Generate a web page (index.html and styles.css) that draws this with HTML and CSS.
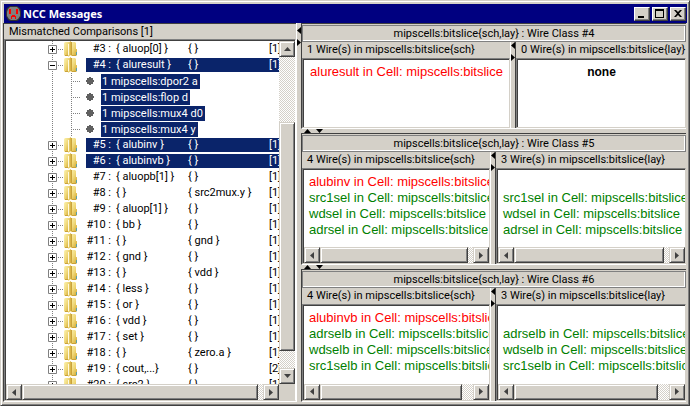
FILE: index.html
```html
<!DOCTYPE html>
<html lang="en">
<head>
<meta charset="utf-8">
<title>NCC Messages</title>
<link rel="stylesheet" href="styles.css">
</head>
<body>
<svg class="symbols" aria-hidden="true">
  <defs>
    <linearGradient id="gold" x1="0" y1="0" x2="1" y2="1">
      <stop offset="0" stop-color="#fbf3b4"/><stop offset=".5" stop-color="#f0d878"/><stop offset="1" stop-color="#cfa42c"/>
    </linearGradient>
    <linearGradient id="cover" x1="0" y1="0" x2="1" y2="0">
      <stop offset="0" stop-color="#f4e28c"/><stop offset="1" stop-color="#d4ad3c"/>
    </linearGradient>
    <symbol id="folder" viewBox="0 0 14 16">
      <path d="M0 2l1-1h4v14H1l-1-1z" fill="url(#gold)"/>
      <path d="M6 1h5l1 1v6h1v6l-1 1H7z" fill="url(#gold)"/>
      <path d="M4 2l3-2v14l-3 2z" fill="url(#cover)"/>
      <path d="M7.500 1v13M1 14.500h3M8 14.500h4" stroke="#c9a23a" fill="none"/>
      <path d="M4.500 3v11" stroke="#fffbe0"/>
      <path d="M12.500 11v3" stroke="#5aa0a8"/>
    </symbol>
    <symbol id="plus" viewBox="0 0 9 9"><path d="M.5.5h8v8h-8z" fill="#fff" stroke="#808080"/><path d="M2 4.5h5M4.5 2v5" stroke="#000"/></symbol>
    <symbol id="minus" viewBox="0 0 9 9"><path d="M.5.5h8v8h-8z" fill="#fff" stroke="#808080"/><path d="M2 4.5h5" stroke="#000"/></symbol>
    <symbol id="dot" viewBox="0 0 8 8"><path d="M3 0h2v1h2v2h1v2H7v2H5v1H3V7H1V5H0V3h1V1h2z" fill="#606060"/></symbol>
    <symbol id="left" viewBox="0 0 4 7"><path d="M4 0v7L0 3.5z"/></symbol>
    <symbol id="right" viewBox="0 0 4 7"><path d="M0 0v7l4-3.500z"/></symbol>
    <symbol id="up" viewBox="0 0 7 4"><path d="M0 4h7L3.500 0z"/></symbol>
    <symbol id="down" viewBox="0 0 7 4"><path d="M0 0h7L3.500 4z"/></symbol>
  </defs>
</svg>
<div class="window">
  <header class="titlebar">
    <svg class="app-icon" viewBox="0 0 15 15" aria-hidden="true">
      <path d="M4 0h7l3 2 1 3v5l-2 4-2 1H4l-2-1-2-4V5l1-3z" fill="#303030"/>
      <path d="M4 1h7l2 2 1 3v4l-2 3-2 1H5l-2-1-2-3V6l1-3z" fill="#808080"/>
      <path d="M3 3h2v5H3zM10 3h2v5h-2zM6 9h3v1h1v3H9v-2H6v2H5v-3h1z" fill="#f00"/>
    </svg>
    <h1>NCC Messages</h1>
    <div class="controls">
      <button aria-label="Minimize"><svg viewBox="0 0 12 10"><path d="M2 7h6v2H2z"/></svg></button>
      <button aria-label="Maximize"><svg viewBox="0 0 12 10"><path d="M1 0h9v9H1zM2 2v6h7V2z" fill-rule="evenodd"/></svg></button>
      <button aria-label="Close"><svg viewBox="0 0 12 10"><path d="M2 1h2l2 2 2-2h2L7 4.500 10 8H8L6 6 4 8H2l3-3.500z"/></svg></button>
    </div>
  </header>
  <main class="panes">
    <section class="tree-pane">
      <h2 class="caption">Mismatched Comparisons [1]</h2>
      <div class="tree-box">
        <ul class="tree">
          <li class="row"><button class="toggle" aria-label="Expand"><svg><use href="#plus"/></svg></button><svg class="folder"><use href="#folder"/></svg><span class="entry"><span>#3 :</span><span>{ aluop[0] }</span><span>{ }</span><span>[1]</span></span></li>
          <li class="row selected"><button class="toggle" aria-label="Collapse"><svg><use href="#minus"/></svg></button><svg class="folder"><use href="#folder"/></svg><span class="entry"><span>#4 :</span><span>{ aluresult }</span><span>{ }</span><span>[1]</span></span></li>
          <li class="leaf"><svg><use href="#dot"/></svg><span>1 mipscells:dpor2 a</span></li>
          <li class="leaf"><svg><use href="#dot"/></svg><span>1 mipscells:flop d</span></li>
          <li class="leaf"><svg><use href="#dot"/></svg><span>1 mipscells:mux4 d0</span></li>
          <li class="leaf"><svg><use href="#dot"/></svg><span>1 mipscells:mux4 y</span></li>
          <li class="row selected"><button class="toggle" aria-label="Expand"><svg><use href="#plus"/></svg></button><svg class="folder"><use href="#folder"/></svg><span class="entry"><span>#5 :</span><span>{ alubinv }</span><span>{ }</span><span>[1]</span></span></li>
          <li class="row selected"><button class="toggle" aria-label="Expand"><svg><use href="#plus"/></svg></button><svg class="folder"><use href="#folder"/></svg><span class="entry"><span>#6 :</span><span>{ alubinvb }</span><span>{ }</span><span>[1]</span></span></li>
          <li class="row"><button class="toggle" aria-label="Expand"><svg><use href="#plus"/></svg></button><svg class="folder"><use href="#folder"/></svg><span class="entry"><span>#7 :</span><span>{ aluopb[1] }</span><span>{ }</span><span>[1]</span></span></li>
          <li class="row"><button class="toggle" aria-label="Expand"><svg><use href="#plus"/></svg></button><svg class="folder"><use href="#folder"/></svg><span class="entry"><span>#8 :</span><span>{ }</span><span>{ src2mux.y }</span><span>[1]</span></span></li>
          <li class="row"><button class="toggle" aria-label="Expand"><svg><use href="#plus"/></svg></button><svg class="folder"><use href="#folder"/></svg><span class="entry"><span>#9 :</span><span>{ aluop[1] }</span><span>{ }</span><span>[1]</span></span></li>
          <li class="row"><button class="toggle" aria-label="Expand"><svg><use href="#plus"/></svg></button><svg class="folder"><use href="#folder"/></svg><span class="entry"><span>#10 :</span><span>{ bb }</span><span>{ }</span><span>[1]</span></span></li>
          <li class="row"><button class="toggle" aria-label="Expand"><svg><use href="#plus"/></svg></button><svg class="folder"><use href="#folder"/></svg><span class="entry"><span>#11 :</span><span>{ }</span><span>{ gnd }</span><span>[1]</span></span></li>
          <li class="row"><button class="toggle" aria-label="Expand"><svg><use href="#plus"/></svg></button><svg class="folder"><use href="#folder"/></svg><span class="entry"><span>#12 :</span><span>{ gnd }</span><span>{ }</span><span>[1]</span></span></li>
          <li class="row"><button class="toggle" aria-label="Expand"><svg><use href="#plus"/></svg></button><svg class="folder"><use href="#folder"/></svg><span class="entry"><span>#13 :</span><span>{ }</span><span>{ vdd }</span><span>[1]</span></span></li>
          <li class="row"><button class="toggle" aria-label="Expand"><svg><use href="#plus"/></svg></button><svg class="folder"><use href="#folder"/></svg><span class="entry"><span>#14 :</span><span>{ less }</span><span>{ }</span><span>[1]</span></span></li>
          <li class="row"><button class="toggle" aria-label="Expand"><svg><use href="#plus"/></svg></button><svg class="folder"><use href="#folder"/></svg><span class="entry"><span>#15 :</span><span>{ or }</span><span>{ }</span><span>[1]</span></span></li>
          <li class="row"><button class="toggle" aria-label="Expand"><svg><use href="#plus"/></svg></button><svg class="folder"><use href="#folder"/></svg><span class="entry"><span>#16 :</span><span>{ vdd }</span><span>{ }</span><span>[1]</span></span></li>
          <li class="row"><button class="toggle" aria-label="Expand"><svg><use href="#plus"/></svg></button><svg class="folder"><use href="#folder"/></svg><span class="entry"><span>#17 :</span><span>{ set }</span><span>{ }</span><span>[1]</span></span></li>
          <li class="row"><button class="toggle" aria-label="Expand"><svg><use href="#plus"/></svg></button><svg class="folder"><use href="#folder"/></svg><span class="entry"><span>#18 :</span><span>{ }</span><span>{ zero.a }</span><span>[1]</span></span></li>
          <li class="row"><button class="toggle" aria-label="Expand"><svg><use href="#plus"/></svg></button><svg class="folder"><use href="#folder"/></svg><span class="entry"><span>#19 :</span><span>{ cout,...}</span><span>{ }</span><span>[2]</span></span></li>
          <li class="row"><button class="toggle" aria-label="Expand"><svg><use href="#plus"/></svg></button><svg class="folder"><use href="#folder"/></svg><span class="entry"><span>#20 :</span><span>{ src2 }</span><span>{ }</span><span>[1]</span></span></li>
        </ul>
        <div class="scroll vertical tree-v">
          <button aria-label="Scroll up"><svg class="wide"><use href="#up"/></svg></button>
          <span class="track"></span><span class="thumb"></span><span class="track-end"></span>
          <button aria-label="Scroll down"><svg class="wide"><use href="#down"/></svg></button>
        </div>
        <div class="scroll tree-h">
          <button aria-label="Scroll left"><svg><use href="#left"/></svg></button>
          <span class="thumb"></span><span class="track-end"></span>
          <button aria-label="Scroll right"><svg><use href="#right"/></svg></button>
        </div>
      </div>
    </section>
    <div class="divider main-divider">
      <button aria-label="Collapse left"><svg><use href="#left"/></svg></button>
      <button aria-label="Collapse right"><svg><use href="#right"/></svg></button>
    </div>
    <div class="classes">
      <section class="wire-class first">
        <h2 class="class-title">mipscells:bitslice{sch,lay} : Wire Class #4</h2>
        <div class="pair">
          <article class="wires">
            <h3 class="caption">1 Wire(s) in mipscells:bitslice{sch}</h3>
            <div class="view"><div class="lines centered"><p class="bad">aluresult in Cell: mipscells:bitslice</p></div></div>
          </article>
          <div class="divider">
            <button aria-label="Collapse left"><svg><use href="#left"/></svg></button>
            <button aria-label="Collapse right"><svg><use href="#right"/></svg></button>
          </div>
          <article class="wires">
            <h3 class="caption">0 Wire(s) in mipscells:bitslice{lay}</h3>
            <div class="view"><div class="lines centered"><p class="none">none</p></div></div>
          </article>
        </div>
      </section>
      <div class="bar">
        <button aria-label="Collapse up"><svg class="wide"><use href="#up"/></svg></button>
        <button aria-label="Collapse down"><svg class="wide"><use href="#down"/></svg></button>
      </div>
      <section class="wire-class second">
        <h2 class="class-title">mipscells:bitslice{sch,lay} : Wire Class #5</h2>
        <div class="pair">
          <article class="wires">
            <h3 class="caption">4 Wire(s) in mipscells:bitslice{sch}</h3>
            <div class="view">
              <div class="lines"><p class="bad">alubinv in Cell: mipscells:bitslice</p><p>src1sel in Cell: mipscells:bitslice</p><p>wdsel in Cell: mipscells:bitslice</p><p>adrsel in Cell: mipscells:bitslice</p></div>
              <div class="scroll short-track">
                <button aria-label="Scroll left"><svg><use href="#left"/></svg></button><span class="thumb"></span><span class="track-end"></span><button aria-label="Scroll right"><svg><use href="#right"/></svg></button>
              </div>
            </div>
          </article>
          <div class="divider">
            <button aria-label="Collapse left"><svg><use href="#left"/></svg></button>
            <button aria-label="Collapse right"><svg><use href="#right"/></svg></button>
          </div>
          <article class="wires">
            <h3 class="caption">3 Wire(s) in mipscells:bitslice{lay}</h3>
            <div class="view">
              <div class="lines"><p></p><p>src1sel in Cell: mipscells:bitslice</p><p>wdsel in Cell: mipscells:bitslice</p><p>adrsel in Cell: mipscells:bitslice</p></div>
              <div class="scroll short-track">
                <button aria-label="Scroll left"><svg><use href="#left"/></svg></button><span class="thumb"></span><span class="track-end"></span><button aria-label="Scroll right"><svg><use href="#right"/></svg></button>
              </div>
            </div>
          </article>
        </div>
      </section>
      <div class="bar">
        <button aria-label="Collapse up"><svg class="wide"><use href="#up"/></svg></button>
        <button aria-label="Collapse down"><svg class="wide"><use href="#down"/></svg></button>
      </div>
      <section class="wire-class third">
        <h2 class="class-title">mipscells:bitslice{sch,lay} : Wire Class #6</h2>
        <div class="pair">
          <article class="wires">
            <h3 class="caption">4 Wire(s) in mipscells:bitslice{sch}</h3>
            <div class="view">
              <div class="lines"><p class="bad">alubinvb in Cell: mipscells:bitslice</p><p>adrselb in Cell: mipscells:bitslice</p><p>wdselb in Cell: mipscells:bitslice</p><p>src1selb in Cell: mipscells:bitslice</p></div>
              <div class="scroll long-track">
                <button aria-label="Scroll left"><svg><use href="#left"/></svg></button><span class="thumb"></span><span class="track-end"></span><button aria-label="Scroll right"><svg><use href="#right"/></svg></button>
              </div>
            </div>
          </article>
          <div class="divider">
            <button aria-label="Collapse left"><svg><use href="#left"/></svg></button>
            <button aria-label="Collapse right"><svg><use href="#right"/></svg></button>
          </div>
          <article class="wires">
            <h3 class="caption">3 Wire(s) in mipscells:bitslice{lay}</h3>
            <div class="view">
              <div class="lines"><p></p><p>adrselb in Cell: mipscells:bitslice</p><p>wdselb in Cell: mipscells:bitslice</p><p>src1selb in Cell: mipscells:bitslice</p></div>
              <div class="scroll long-track">
                <button aria-label="Scroll left"><svg><use href="#left"/></svg></button><span class="thumb"></span><span class="track-end"></span><button aria-label="Scroll right"><svg><use href="#right"/></svg></button>
              </div>
            </div>
          </article>
        </div>
      </section>
    </div>
  </main>
</div>
</body>
</html>
```
FILE: styles.css
```css
* { box-sizing: border-box; }

:root {
  --face: #d4d0c8;
  --shade: #808080;
  --dark: #404040;
  --select: #0a246a;
}

body, h1, h2, h3, p, ul { margin: 0; padding: 0; }

body {
  background: var(--face);
  color: #000;
  font: 11px/16px Roboto, "Noto Sans", sans-serif;
}

button {
  display: flex;
  align-items: center;
  justify-content: center;
  flex: none;
  margin: 0;
  padding: 0;
  border: 0;
  background: none;
}

svg { display: block; flex: none; }
.symbols { position: absolute; width: 0; height: 0; }

.window {
  display: flex;
  flex-direction: column;
  height: 100vh;
  padding: 2px;
  border: 1px solid;
  border-color: var(--face) var(--dark) var(--dark) var(--face);
  box-shadow: inset 1px 1px #fff, inset -1px -1px var(--shade);
}

.titlebar {
  display: flex;
  align-items: center;
  flex: none;
  height: 19px;
  margin: 1px 0 0 1px;
  padding: 0 1px 0 2px;
  background: #000080;
  color: #fff;
}
.app-icon { width: 15px; height: 15px; }
.titlebar h1 { flex: 1; margin-left: 2px; font: bold 11px/16px "Noto Sans", sans-serif; }
.controls { display: flex; gap: 2px; }
.controls button {
  width: 16px;
  height: 14px;
  background: var(--face);
  border: 1px solid;
  border-color: #fff var(--dark) var(--dark) #fff;
  box-shadow: inset -1px -1px var(--shade);
}
.controls svg { width: 12px; height: 10px; }

.panes {
  display: grid;
  grid-template-columns: 293fr 5px 386fr;
  flex: 1;
  min-height: 0;
  padding-bottom: 1px;
}

.caption { flex: none; overflow: hidden; white-space: nowrap; font-size: 11px; font-weight: normal; }

.tree-pane {
  display: flex;
  flex-direction: column;
  min-width: 0;
  min-height: 0;
  border-top: 1px solid var(--dark);
  border-left: 1px solid var(--dark);
  border-bottom: 1px solid #fff;
}
.tree-pane .caption { padding-left: 5px; height: 15px; }
.tree-box {
  display: grid;
  grid-template: minmax(0, 1fr) 16px / minmax(0, 1fr) 16px;
  flex: 1;
  min-height: 0;
  border: 1px solid;
  border-color: var(--shade) #fff var(--face) var(--shade);
  box-shadow: inset 1px 1px var(--dark);
  padding: 1px 0 0 1px;
}
.tree { overflow: hidden; background: #fff; list-style: none; }

.row, .leaf { display: flex; align-items: center; height: 16px; padding-left: 42px; white-space: nowrap; }
.toggle {
  align-self: stretch;
  justify-content: flex-start;
  width: 16px;
  background:
    repeating-linear-gradient(90deg, var(--shade) 0 1px, transparent 1px 2px) 10px 8px / 6px 1px no-repeat,
    repeating-linear-gradient(180deg, var(--shade) 0 1px, transparent 1px 2px) 4px 0 / 1px 16px no-repeat;
}
.toggle svg { width: 9px; height: 9px; }
.folder { width: 14px; height: 16px; margin-right: 8px; }
.entry {
  display: grid;
  grid-template-columns: 25px 67px 76px 1fr;
  column-gap: 5px;
  flex: 1;
  min-width: 0;
  height: 14px;
  line-height: 14px;
}
.entry span:first-child { text-align: right; }
.selected .entry { background: var(--select); color: #fff; }
.leaf {
  background:
    repeating-linear-gradient(180deg, var(--shade) 0 1px, transparent 1px 2px) 46px 0 / 1px 16px no-repeat,
    repeating-linear-gradient(180deg, var(--shade) 0 1px, transparent 1px 2px) 65px 0 / 1px 16px no-repeat,
    repeating-linear-gradient(90deg, var(--shade) 0 1px, transparent 1px 2px) 67px 8px / 8px 1px no-repeat;
  padding-left: 80px;
}
.leaf svg { width: 8px; height: 8px; margin-right: 7px; }
.leaf span { padding: 0 2px 0 1px; background: var(--select); color: #fff; line-height: 15px; }

.scroll {
  display: flex;
  flex: none;
  height: 16px;
  background: repeating-conic-gradient(#fff 0 25%, var(--face) 0 50%) 0 0 / 2px 2px;
}
.scroll.vertical { flex-direction: column; height: auto; }
.scroll button, .thumb {
  background: var(--face);
  border: 1px solid;
  border-color: var(--face) var(--dark) var(--dark) var(--face);
  box-shadow: inset 1px 1px #fff, inset -1px -1px var(--shade);
}
.scroll button { width: 16px; height: 16px; }
.scroll svg, .divider svg { width: 4px; height: 7px; }
.scroll svg { fill: var(--dark); }
.scroll .wide, .bar .wide { width: 7px; height: 4px; }
.tree-v .track { flex: 66; }
.tree-v .thumb { flex: 230; }
.tree-v .track-end { flex: 17; }
.tree-h .thumb { flex: 236; }
.tree-h .track-end { flex: 5; }
.short-track .thumb { flex: 148; }
.short-track .track-end { flex: 5; }
.long-track .thumb { flex: 142; }
.long-track .track-end { flex: 11; }

.divider {
  display: flex;
  flex-direction: column;
  align-items: flex-end;
  gap: 5px;
  border-left: 1px solid #fff;
}
.main-divider { padding-top: 4px; }

.classes { display: flex; flex-direction: column; min-width: 0; min-height: 0; border-right: 1px solid var(--face); }
.wire-class {
  display: flex;
  flex-direction: column;
  min-height: 0;
  border-top: 1px solid var(--dark);
  border-left: 1px solid var(--dark);
  border-bottom: 1px solid #fff;
}
.first { flex: 106; }
.second { flex: 132; }
.third { flex: 133; }
.class-title {
  flex: none;
  height: 17px;
  margin: 1px 0 0;
  border: 1px solid var(--shade);
  box-shadow: inset -1px -1px #fff;
  font-size: 11px;
  font-weight: normal;
  line-height: 15px;
  text-align: center;
  white-space: nowrap;
}
.pair { display: grid; grid-template-columns: minmax(0, 187fr) 5px minmax(0, 190fr); flex: 1; min-height: 0; }
.first .pair { grid-template-columns: minmax(0, 207fr) 5px minmax(0, 170fr); }
.wires { display: flex; flex-direction: column; min-width: 0; min-height: 0; }
.wires .caption { padding-left: 5px; }
.divider + .wires { border-left: 1px solid var(--dark); }
.view {
  display: flex;
  flex-direction: column;
  flex: 1;
  min-height: 0;
  background: #fff;
  border: 1px solid;
  border-color: var(--shade) var(--face) var(--face) var(--shade);
  box-shadow: inset 1px 1px var(--dark);
  padding: 1px 0 0 1px;
}
.lines {
  flex: 1;
  min-height: 0;
  overflow: hidden;
  padding: 4px 0 0 5px;
  color: #008000;
  font: 13px/16px "Liberation Sans", Arial, sans-serif;
  white-space: nowrap;
}
.lines p { height: 16px; }
.lines.centered { padding-left: 0; text-align: center; }
.lines .bad { color: #f00; }
.lines .none { color: #000; font-weight: bold; font-size: 12px; }

.bar { display: flex; flex: none; align-items: flex-end; gap: 5px; height: 4px; padding-left: 3px; }
```
